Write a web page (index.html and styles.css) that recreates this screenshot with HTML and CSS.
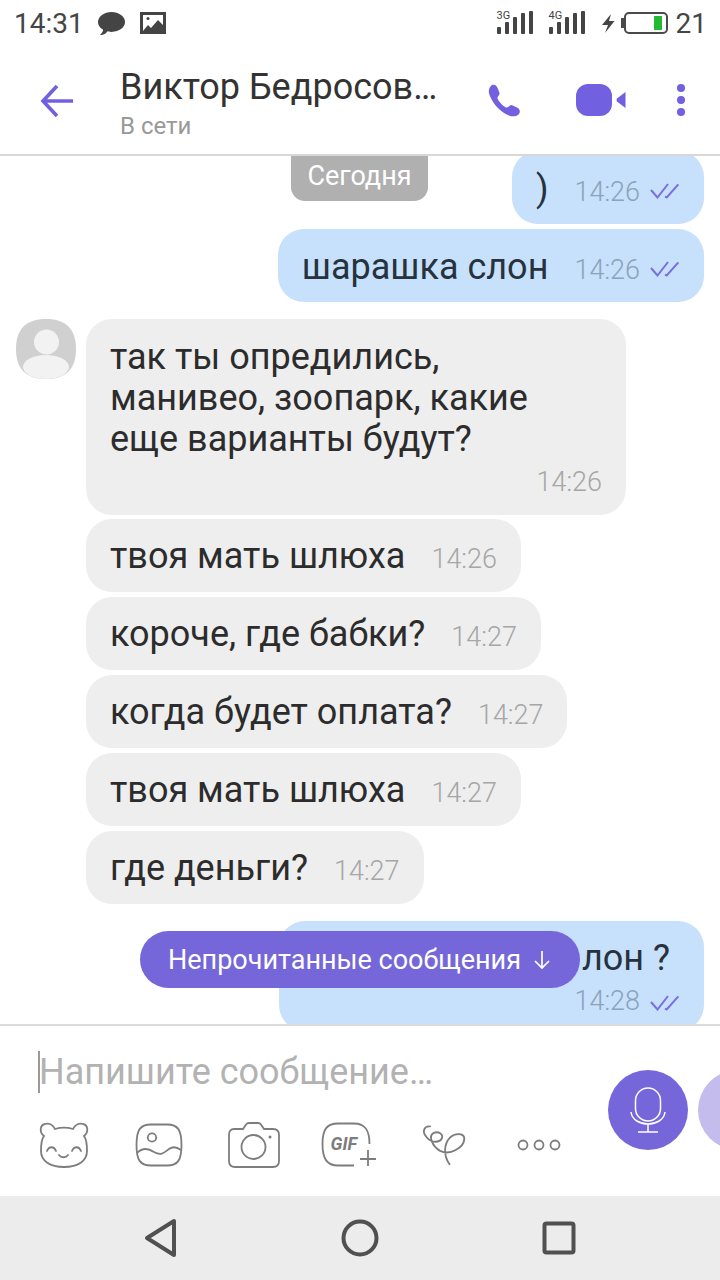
FILE: index.html
```html
<!DOCTYPE html>
<html>
<head>
    <title>Viber chat</title>
    <link rel="stylesheet" href="styles.css">
</head>
<body>
    <div class="status-bar">
        <span class="status-text">14:31</span>
        <svg class="status-bubble" width="27" height="23" viewBox="0 0 27 23"><ellipse cx="13.500" cy="10" rx="13.500" ry="10" fill="#444"/><path d="M2 23 C6 23 9 21 10 18 L5 15 C5.500 18 5 20.500 2 23Z" fill="#444"/></svg>
        <svg class="status-picture" width="26" height="22" viewBox="0 0 26 22"><path d="M0 0H26V22H0Z M3 3V19H23V3Z" fill="#444" fill-rule="evenodd"/><path d="M3 19 L8 13 L11 16 L18 8 L24 14 V20 H3Z" fill="#444"/><circle cx="8" cy="6.500" r="1.500" fill="#444"/></svg>
        <span class="status-spacer"></span>
        <div class="signal">
            <span class="signal-label">3G</span>
            <svg width="36" height="24" viewBox="0 0 36 24"><rect x="0" y="16" width="4" height="7" rx="1" fill="#444"/><rect x="8" y="11" width="4" height="12" rx="1" fill="#444"/><rect x="16" y="6" width="4" height="17" rx="1" fill="#444"/><rect x="24" y="2" width="4" height="21" rx="1" fill="#444"/><rect x="32" y="0" width="4" height="23" rx="1" fill="#444"/></svg>
        </div>
        <div class="signal signal-second">
            <span class="signal-label">4G</span>
            <svg width="36" height="24" viewBox="0 0 36 24"><rect x="0" y="16" width="4" height="7" rx="1" fill="#444"/><rect x="8" y="11" width="4" height="12" rx="1" fill="#444"/><rect x="16" y="6" width="4" height="17" rx="1" fill="#444"/><rect x="24" y="2" width="4" height="21" rx="1" fill="#444"/><rect x="32" y="0" width="4" height="23" rx="1" fill="#444"/></svg>
        </div>
        <svg class="bolt" width="13" height="19" viewBox="0 0 13 19"><path d="M9 0 L0 11 H6 L3 19 L12.500 7 H7 Z" fill="#444"/></svg>
        <div class="battery"><span class="battery-fill"></span></div>
        <span class="status-text status-level">21</span>
    </div>

    <header class="chat-header">
        <svg class="back" width="34" height="34" viewBox="0 0 34 34"><path d="M33 17H3 M17 2 L3 17 L17 32" fill="none" stroke="#7160e0" stroke-width="3.600"/></svg>
        <div class="peer">
            <div class="peer-name">Виктор Бедросов…</div>
            <div class="peer-state">В сети</div>
        </div>
        <svg class="call" width="33" height="33" viewBox="0 0 33 33"><path d="M4 1 C7 0 9 2 10 5 L11.500 9 C12 11 9 12.500 9.500 14.500 C11 18 15 22 18 23.500 C20.500 24 21.500 21 23.500 21 L29 23.500 C32 25 32.500 28 31 30 C29 32.500 25 33 21 31.500 C12 28 5 20 1.500 11 C0 7 1 3 4 1Z" fill="#7160e0"/></svg>
        <svg class="video" width="50" height="32" viewBox="0 0 50 32"><rect x="0" y="0" width="36" height="32" rx="12" fill="#7160e0"/><path d="M49.500 8 V24 L41 17.500 Q40 16 41 14.500Z" fill="#7160e0"/></svg>
        <svg class="more" width="12" height="32" viewBox="0 0 12 32"><circle cx="6" cy="4" r="4" fill="#7160e0"/><circle cx="6" cy="16" r="4" fill="#7160e0"/><circle cx="6" cy="28" r="4" fill="#7160e0"/></svg>
    </header>

    <main class="chat">
        <div class="date-pill">Сегодня</div>

        <div class="row row-own row-clipped">
            <div class="bubble bubble-own">
                <span>)</span>
                <span class="time">14:26</span>
                <svg class="ticks" width="30" height="16" viewBox="0 0 30 16"><path d="M1 7 L7.500 14.500 L18 1 M15 13.500 L16.700 14.500 L28.300 1.300" fill="none" stroke="#7a6ee0" stroke-width="2"/></svg>
            </div>
        </div>
        <div class="row row-own">
            <div class="bubble bubble-own">
                <span>шарашка слон</span>
                <span class="time">14:26</span>
                <svg class="ticks" width="30" height="16" viewBox="0 0 30 16"><path d="M1 7 L7.500 14.500 L18 1 M15 13.500 L16.700 14.500 L28.300 1.300" fill="none" stroke="#7a6ee0" stroke-width="2"/></svg>
            </div>
        </div>

        <div class="row row-first">
            <svg class="avatar" width="60" height="60" viewBox="0 0 60 60">
                <path d="M30 0 C50 0 60 10 60 30 C60 50 50 60 30 60 C10 60 0 50 0 30 C0 10 10 0 30 0Z" fill="#d0d0d0"/>
                <circle cx="30.500" cy="23" r="12.500" fill="#f2f2f2"/>
                <ellipse cx="30" cy="48" rx="23" ry="12" fill="#f2f2f2"/>
            </svg>
            <div class="bubble bubble-peer bubble-long">
                <div>так ты опредились,<br>манивео, зоопарк, какие<br>еще варианты будут?</div>
                <div class="time-line"><span class="time">14:26</span></div>
            </div>
        </div>
        <div class="row row-peer"><div class="bubble bubble-peer"><span>твоя мать шлюха</span><span class="time">14:26</span></div></div>
        <div class="row row-peer"><div class="bubble bubble-peer"><span>короче, где бабки?</span><span class="time">14:27</span></div></div>
        <div class="row row-peer"><div class="bubble bubble-peer"><span>когда будет оплата?</span><span class="time">14:27</span></div></div>
        <div class="row row-peer"><div class="bubble bubble-peer"><span>твоя мать шлюха</span><span class="time">14:27</span></div></div>
        <div class="row row-peer"><div class="bubble bubble-peer"><span>где деньги?</span><span class="time">14:27</span></div></div>

        <div class="row row-own row-last">
            <div class="bubble bubble-own bubble-tall">
                <div class="tall-text">лон ?</div>
                <div class="time-line">
                    <span class="time">14:28</span>
                    <svg class="ticks" width="30" height="16" viewBox="0 0 30 16"><path d="M1 7 L7.500 14.500 L18 1 M15 13.500 L16.700 14.500 L28.300 1.300" fill="none" stroke="#7a6ee0" stroke-width="2"/></svg>
                </div>
            </div>
        </div>

        <div class="unread-pill">
            Непрочитанные сообщения
            <svg width="18" height="20" viewBox="0 0 18 20"><path d="M9 1V18 M2 11 L9 18 L16 11" fill="none" stroke="#fff" stroke-width="1.700"/></svg>
        </div>
    </main>

    <section class="composer">
        <div class="composer-left">
            <div class="input-line"><span class="caret"></span>Напишите сообщение…</div>
            <div class="tools">
                <svg width="52" height="46" viewBox="0 0 52 46" fill="none" stroke="#7d7d7d" stroke-width="1.800" stroke-linecap="round">
                    <path d="M6 14 C3 18 3 24 3 29 C3 39 12 45 26 45 C40 45 49 39 49 29 C49 24 49 18 46 14 C51 10 50 3 45 2 C41 1 37 3 35 7 C30 5.500 22 5.500 17 7 C15 3 11 1 7 2 C2 3 1 10 6 14Z"/>
                    <path d="M9 29 C11 24 16 24 18 29 M34 29 C36 24 41 24 43 29 M21 33 C23 36 28 36 30 33"/>
                </svg>
                <svg width="48" height="44" viewBox="0 0 48 44" fill="none" stroke="#7d7d7d" stroke-width="1.800">
                    <path d="M16 1.500 H32 C43 1.500 46.500 7 46.500 22 C46.500 37 43 42.500 32 42.500 H16 C5 42.500 1.500 37 1.500 22 C1.500 7 5 1.500 16 1.500Z"/>
                    <circle cx="17" cy="14.500" r="4.200"/>
                    <path d="M2 30 C7 25 13 25 19 29 C26 33 29 30 34 26 C38 23 42 24 46 27"/>
                </svg>
                <svg width="52" height="46" viewBox="0 0 52 46" fill="none" stroke="#7d7d7d" stroke-width="1.800">
                    <path d="M6 7 H15 L18 2.500 Q19 1 21 1 H30 Q32 1 33 2.500 L36 7 H45 Q51 7 51 13 V39 Q51 45 45 45 H7 Q1 45 1 39 V13 Q1 7 6 7Z"/>
                    <circle cx="25.500" cy="25" r="12"/>
                    <circle cx="42" cy="15" r="1.500" fill="#7d7d7d" stroke="none"/>
                </svg>
                <div class="gif-icon">
                    <svg width="56" height="46" viewBox="0 0 56 46" fill="none" stroke="#7d7d7d" stroke-width="1.800">
                        <path d="M33 43.500 H17 C6 43.500 1.500 37 1.500 22 C1.500 7 6 1.500 17 1.500 H33 C44 1.500 48.500 8 48.500 22"/>
                        <path d="M47 28 V44 M39 37 H55"/>
                    </svg>
                    <span class="gif-label">GIF</span>
                </div>
                <svg width="47" height="42" viewBox="30 25 140 125" fill="none" stroke="#7d7d7d" stroke-width="5.500" stroke-linecap="round">
                    <path d="M60 32 C42 30 36 48 48 62 C60 78 85 85 95 68 C100 55 85 45 70 52 C55 60 65 90 90 105 C120 120 160 95 162 70 C163 52 135 50 120 65 C100 85 100 120 118 145"/>
                </svg>
                <svg width="44" height="12" viewBox="0 0 44 12" fill="none" stroke="#7d7d7d" stroke-width="1.800">
                    <circle cx="6" cy="6" r="4.500"/><circle cx="22" cy="6" r="4.500"/><circle cx="38" cy="6" r="4.500"/>
                </svg>
            </div>
        </div>
        <div class="round-button">
            <svg width="36" height="46" viewBox="0 0 36 46" fill="none" stroke="#fff" stroke-width="1.500">
                <rect x="5.500" y="1" width="25" height="33" rx="12.500"/>
                <path d="M1 25 C2 33 10 37 18 37 C26 37 34 33 35 25 M18 37 V45 M8 45 H28"/>
            </svg>
        </div>
        <div class="round-button round-button-light"></div>
    </section>

    <nav class="nav-bar">
        <svg width="34" height="40" viewBox="0 0 34 40"><path d="M30 3 V37 L3 20Z" fill="none" stroke="#505050" stroke-width="4" stroke-linejoin="round"/></svg>
        <svg width="38" height="38" viewBox="0 0 38 38"><circle cx="19" cy="19" r="16.500" fill="none" stroke="#505050" stroke-width="4"/></svg>
        <svg width="34" height="34" viewBox="0 0 34 34"><rect x="2.500" y="2.500" width="29" height="29" rx="2" fill="none" stroke="#505050" stroke-width="4"/></svg>
    </nav>
</body>
</html>
```

FILE: styles.css
```css
* {
    box-sizing: border-box;
}

body {
    font-family: Roboto, 'Noto Sans', sans-serif;
    display: flex;
    flex-direction: column;
    width: 720px;
    height: 1280px;
    margin: 0;
    background-color: #ffffff;
    overflow: hidden;
}

svg {
    display: block;
    flex-shrink: 0;
}

.status-bar {
    display: flex;
    align-items: center;
    height: 46px;
    padding: 0 13px 0 14px;
    flex-shrink: 0;
}

.status-text {
    font-size: 28px;
    color: #454545;
}

.status-bubble {
    margin-left: 14px;
}

.status-picture {
    margin-left: 15px;
}

.status-spacer {
    flex: 1;
}

.signal {
    position: relative;
    width: 36px;
}

.signal-second {
    margin-left: 16px;
}

.signal-label {
    position: absolute;
    left: 0;
    top: -2px;
    font-size: 11px;
    color: #444;
}

.bolt {
    margin-left: 17px;
}

.battery {
    position: relative;
    display: flex;
    justify-content: flex-end;
    align-items: stretch;
    width: 44px;
    height: 22px;
    margin-left: 9px;
    padding: 2px 4px 2px 0;
    border: 2px solid #4a4a4a;
    border-radius: 5px;
}

.battery::before {
    content: '';
    position: absolute;
    left: -5px;
    top: 4px;
    width: 3px;
    height: 10px;
    background-color: #4a4a4a;
}

.battery-fill {
    width: 8px;
    background-color: #22bb33;
}

.status-level {
    margin-left: 8px;
}

.chat-header {
    display: flex;
    align-items: flex-start;
    height: 110px;
    padding: 38px 0 0 40px;
    border-bottom: 2px solid #d8d8d8;
    flex-shrink: 0;
}

.peer {
    width: 368px;
    margin-left: 46px;
    margin-top: -18px;
}

.peer-name {
    font-size: 36px;
    line-height: 42px;
    white-space: nowrap;
    color: #333333;
}

.peer-state {
    font-size: 24px;
    line-height: 30px;
    margin-top: 3px;
    color: #999999;
}

.video {
    margin-left: 55px;
}

.more {
    margin-left: 49px;
}

.chat {
    position: relative;
    flex: 1;
    min-height: 0;
    padding: 0 16px;
    overflow: hidden;
}

.row {
    display: flex;
    margin-top: 5px;
}

.row-own {
    justify-content: flex-end;
}

.row-clipped {
    margin-top: -5px;
}

.row-first {
    gap: 10px;
    margin-top: 17px;
}

.row-peer {
    padding-left: 70px;
}

.row-first + .row-peer {
    margin-top: 4px;
}

.row-last {
    margin-top: 17px;
}

.bubble {
    display: flex;
    align-items: baseline;
    height: 73px;
    padding: 1px 24px 0;
    line-height: 73px;
    font-size: 36px;
    white-space: nowrap;
    color: #2c2c2c;
    border-radius: 26px;
}

.bubble-own {
    padding-top: 2px;
    background-color: #c7e0fb;
    color: #26323d;
}

.bubble-peer {
    background-color: #eeeeee;
}

.bubble-long {
    display: block;
    width: 540px;
    height: 196px;
    padding: 18px 24px 0;
    line-height: 41px;
}

.bubble-tall {
    display: block;
    width: 425px;
    height: 110px;
    padding: 17px 24px 0;
    line-height: 41px;
}

.tall-text {
    padding-right: 10px;
    text-align: right;
}

.time {
    margin-left: 26px;
    font-size: 27px;
    font-weight: 300;
    color: #a6a6a6;
}

.bubble-own .time {
    color: #8ba3b8;
}

.ticks {
    margin: 4px 0 0 10px;
    align-self: center;
}

.time-line {
    display: flex;
    justify-content: flex-end;
    align-items: center;
    height: 42px;
    margin-top: 1px;
    line-height: 42px;
}

.date-pill {
    position: absolute;
    left: 291px;
    top: 0;
    width: 137px;
    height: 45px;
    line-height: 41px;
    text-align: center;
    font-size: 27px;
    color: #ffffff;
    background-color: #b0b0b0;
    border-radius: 0 0 14px 14px;
}

.unread-pill {
    position: absolute;
    left: 140px;
    top: 775px;
    display: flex;
    align-items: center;
    gap: 12px;
    width: 440px;
    height: 57px;
    padding-left: 28px;
    font-size: 27px;
    white-space: nowrap;
    color: #ffffff;
    background-color: #7567d9;
    border-radius: 29px;
}

.composer {
    display: flex;
    align-items: flex-start;
    height: 172px;
    border-top: 2px solid #dcdcdc;
    overflow: hidden;
    flex-shrink: 0;
}

.composer-left {
    width: 608px;
    flex-shrink: 0;
}

.input-line {
    display: flex;
    align-items: center;
    height: 42px;
    margin: 25px 0 0 38px;
    font-size: 36px;
    white-space: nowrap;
    color: #b2b2b2;
}

.caret {
    width: 2px;
    height: 42px;
    margin-right: -1px;
    background-color: #9a9a9a;
}

.tools {
    display: grid;
    grid-template-columns: repeat(6, 95px);
    justify-items: center;
    align-items: center;
    height: 46px;
    margin: 29px 0 0 16px;
}

.gif-icon {
    position: relative;
}

.gif-label {
    position: absolute;
    left: 10px;
    top: 11px;
    font-size: 18px;
    font-weight: 700;
    font-style: italic;
    color: #7d7d7d;
}

.round-button {
    display: flex;
    justify-content: center;
    align-items: center;
    width: 80px;
    height: 80px;
    margin-top: 44px;
    background-color: #7567d9;
    border-radius: 50%;
    flex-shrink: 0;
}

.round-button-light {
    margin-left: 10px;
    background-color: #c3bcec;
}

.nav-bar {
    display: flex;
    justify-content: center;
    align-items: center;
    gap: 163px;
    height: 84px;
    background-color: #ececec;
    flex-shrink: 0;
}
```
